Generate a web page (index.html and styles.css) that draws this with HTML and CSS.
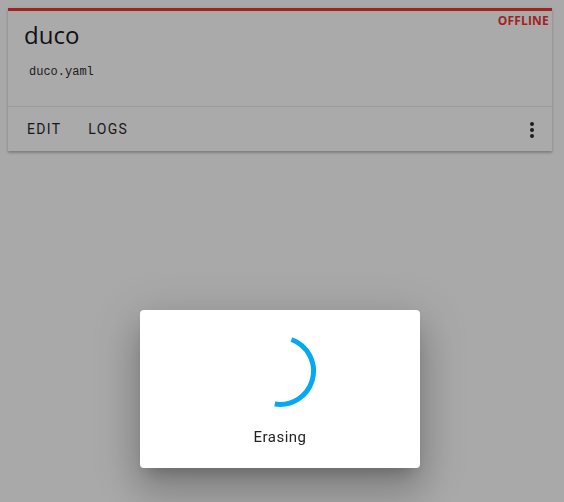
FILE: index.html
```html
<!DOCTYPE html>
<html>
<head>
<meta charset="utf-8">
<link rel="stylesheet" href="styles.css">
</head>
<body>
<div class="card">
  <div class="status">OFFLINE</div>
  <div class="card-content">
    <div class="title">duco</div>
    <div class="file">duco.yaml</div>
  </div>
  <div class="actions">
    <span class="btn">EDIT</span>
    <span class="btn">LOGS</span>
    <span class="spacer"></span>
    <svg class="menu" width="24" height="24" viewBox="0 0 24 24"><path fill="#1c1c1c" d="M12,16A2,2 0 0,1 14,18A2,2 0 0,1 12,20A2,2 0 0,1 10,18A2,2 0 0,1 12,16M12,10A2,2 0 0,1 14,12A2,2 0 0,1 12,14A2,2 0 0,1 10,12A2,2 0 0,1 12,10M12,4A2,2 0 0,1 14,6A2,2 0 0,1 12,8A2,2 0 0,1 10,6A2,2 0 0,1 12,4Z"/></svg>
  </div>
</div>
<div class="overlay">
  <div class="dialog">
    <svg class="spinner" width="80" height="80" viewBox="0 0 80 80"><path d="M51.46,8.52 A33.5,33.5 0 0,1 34.76,73.09" fill="none" stroke="#03a9f4" stroke-width="5"/></svg>
    <div class="label">Erasing</div>
  </div>
</div>
</body>
</html>
```

FILE: styles.css
```css
html, body {
  margin: 0;
  padding: 0;
  background: #a9a9a9;
  font-family: Roboto, "Liberation Sans", sans-serif;
}
body {
  padding: 8px;
  height: 486px;
  box-sizing: content-box;
}
.card {
  position: relative;
  width: 544px;
  height: 143px;
  box-sizing: border-box;
  background: #aaaaaa;
  border-top: 3px solid #a1221f;
  box-shadow: 0 2px 2px rgba(0,0,0,0.18), 0 1px 4px rgba(0,0,0,0.12);
  display: flex;
  flex-direction: column;
}
.status {
  position: absolute;
  top: 1px;
  right: 3px;
  font-size: 12px;
  font-weight: bold;
  color: #a1221f;
  font-family: "Open Sans", "Liberation Sans", sans-serif;
  letter-spacing: 0.2px;
}
.card-content {
  padding: 8px 16px 0 16px;
  height: 96px;
  box-sizing: border-box;
  border-bottom: 1px solid #9c9c9c;
}
.title {
  font-size: 24px;
  line-height: 32px;
  color: #111;
  font-family: "Open Sans", Roboto, sans-serif;
}
.file {
  margin-top: 13px;
  margin-left: 5px;
  font-family: "Liberation Mono", "DejaVu Sans Mono", monospace;
  font-size: 12px;
  line-height: 16px;
  color: #1b1b1b;
}
.actions {
  flex: 1;
  display: flex;
  align-items: center;
  padding: 0 8px 0 19px;
}
.btn {
  font-size: 14px;
  letter-spacing: 1.3px;
  color: #181818;
  margin-right: 27px;
}
.spacer { flex: 1; }
.menu { display: block; margin-top: 1px; }
.overlay {
  position: fixed;
  inset: 0;
  display: flex;
  justify-content: center;
  align-items: flex-start;
  padding-top: 310px;
  padding-right: 4px;
}
.dialog {
  width: 280px;
  height: 158px;
  background: #fff;
  border-radius: 4px;
  box-shadow: 0 11px 15px -7px rgba(0,0,0,0.22), 0 24px 38px 3px rgba(0,0,0,0.16), 0 9px 46px 8px rgba(0,0,0,0.12);
  display: flex;
  flex-direction: column;
  align-items: center;
  box-sizing: border-box;
  padding-top: 21px;
}
.spinner { display: block; }
.label {
  margin-top: 17px;
  font-size: 15px;
  letter-spacing: 0.5px;
  color: #222;
  font-family: Roboto, "Liberation Sans", sans-serif;
}
```
